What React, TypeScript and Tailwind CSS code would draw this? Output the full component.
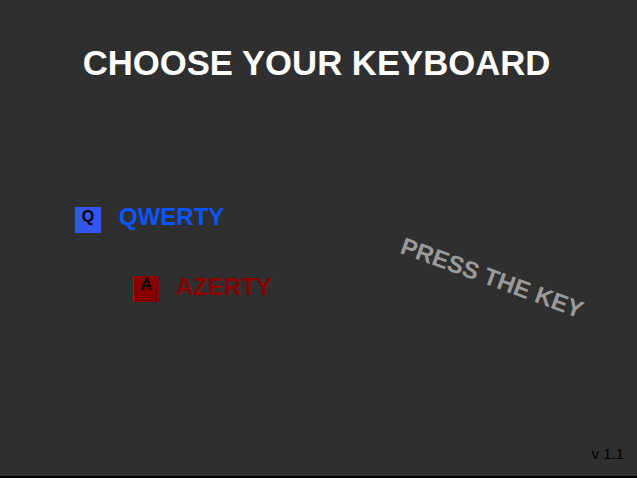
export default function App() {
  return (
    <div className="relative flex h-[478px] w-full flex-col overflow-hidden bg-black font-['Liberation_Sans',Arial,sans-serif]">
      <div className="flex flex-1 flex-col bg-[#2f2f2f]">
        {/* Title */}
        <h1 className="pr-[4px] pt-[46px] text-center text-[34.7px] font-bold leading-none text-white">
          CHOOSE YOUR KEYBOARD
        </h1>

        {/* Options */}
        <div className="mt-[126px] flex flex-col">
          <div className="ml-[75px] flex items-start gap-[18px]">
            <div className="flex h-[26px] w-[26px] justify-center bg-[#3355f0] pt-[2px] text-[16px] font-bold leading-none text-black">
              Q
            </div>
            <span className="-mt-[2px] text-[24px] font-bold leading-none text-[#0a55ff]">QWERTY</span>
          </div>
          <div className="ml-[133px] mt-[43px] flex items-start gap-[17px]">
            <div className="flex h-[26px] w-[26px] justify-center border-l border-[#b01818] bg-[#870000] pt-[1px] text-[16px] font-bold leading-none text-black">
              A
            </div>
            <span className="-mt-[1px] text-[24px] font-bold leading-none text-[#8a0000]">AZERTY</span>
          </div>
        </div>

        {/* Version */}
        <div className="mt-auto flex justify-end pb-[15px] pr-[13px]">
          <span className="text-[15px] leading-none text-black">v 1.1</span>
        </div>
      </div>
      <div className="h-[2px] bg-black" />

      {/* Rotated hint */}
      <span className="absolute left-[396px] top-[266px] w-[192px] rotate-[20deg] whitespace-nowrap text-center text-[24px] font-bold leading-none text-[#9a9a9a]">
        PRESS THE KEY
      </span>
    </div>
  );
}
